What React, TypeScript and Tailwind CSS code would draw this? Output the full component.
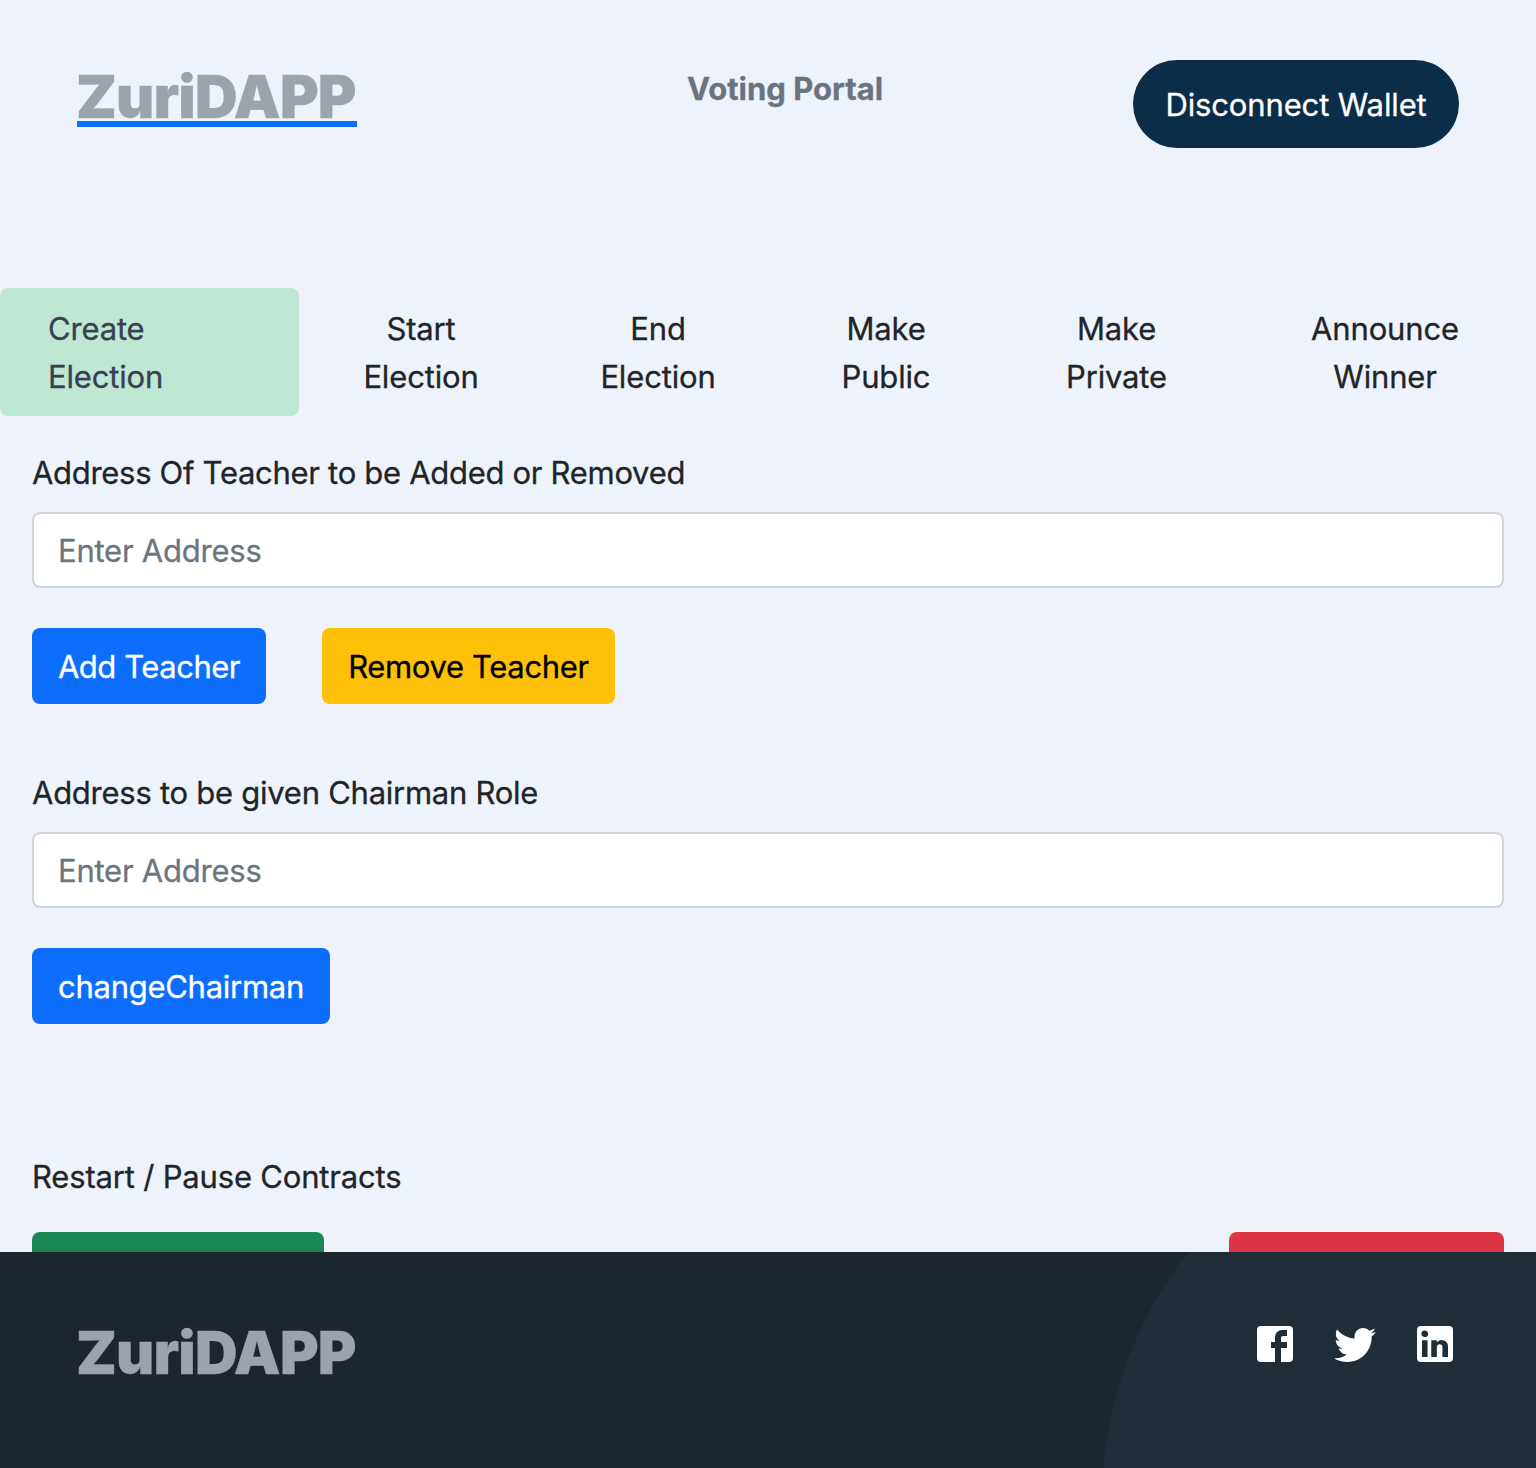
import type { ReactNode } from "react";

const steps = [
  { lines: ["Start", "Election"], width: "w-[244px]" },
  { lines: ["End", "Election"], width: "w-[230px]" },
  { lines: ["Make", "Public"], width: "w-[226px]" },
  { lines: ["Make", "Private"], width: "w-[235px]" },
  { lines: ["Announce", "Winner"], width: "w-[302px]" },
];

const socialIcons = [
  {
    name: "Facebook",
    path: "M5,3H19A2,2 0 0,1 21,5V19A2,2 0 0,1 19,21H5A2,2 0 0,1 3,19V5A2,2 0 0,1 5,3M18,5H15.5A3.5,3.5 0 0,0 12,8.5V11H10V14H12V21H15V14H18V11H15V9A1,1 0 0,1 16,8H18V5Z",
  },
  {
    name: "Twitter",
    path: "M22.46,6C21.69,6.35 20.86,6.58 20,6.69C20.88,6.16 21.56,5.32 21.88,4.31C21.05,4.81 20.13,5.16 19.16,5.36C18.37,4.5 17.26,4 16,4C13.65,4 11.73,5.92 11.73,8.29C11.73,8.63 11.77,8.96 11.84,9.27C8.28,9.09 5.11,7.38 3,4.79C2.63,5.42 2.42,6.16 2.42,6.94C2.42,8.43 3.17,9.75 4.33,10.5C3.62,10.5 2.96,10.3 2.38,10V10.03C2.38,12.11 3.86,13.85 5.82,14.24C5.46,14.34 5.08,14.39 4.69,14.39C4.42,14.39 4.15,14.36 3.89,14.31C4.43,16 6,17.26 7.89,17.29C6.43,18.45 4.58,19.13 2.56,19.13C2.22,19.13 1.88,19.11 1.54,19.07C3.44,20.29 5.7,21 8.12,21C16,21 20.33,14.46 20.33,8.79C20.33,8.6 20.33,8.42 20.32,8.23C21.16,7.63 21.88,6.87 22.46,6Z",
  },
  {
    name: "LinkedIn",
    path: "M19,3A2,2 0 0,1 21,5V19A2,2 0 0,1 19,21H5A2,2 0 0,1 3,19V5A2,2 0 0,1 5,3H19M18.5,18.5V13.2A3.26,3.26 0 0,0 15.24,9.94C14.39,9.94 13.4,10.46 12.92,11.24V10.13H10.13V18.5H12.92V13.57C12.92,12.8 13.54,12.17 14.31,12.17A1.4,1.4 0 0,1 15.71,13.57V18.5H18.5M6.88,8.56A1.68,1.68 0 0,0 8.56,6.88C8.56,5.95 7.81,5.19 6.88,5.19A1.69,1.69 0 0,0 5.19,6.88C5.19,7.81 5.95,8.56 6.88,8.56M8.27,18.5V10.13H5.5V18.5H8.27Z",
  },
];

function Logo({ underlined = false }: { underlined?: boolean }) {
  return (
    <a
      className={`block h-[61px] w-[280px] -indent-px text-[59px] leading-[61px] font-black tracking-[-0.85px] whitespace-nowrap text-[#9ca3af] ${
        underlined ? "border-b-[6px] border-[#0d6efd]" : ""
      }`}
    >
      ZuriDAPP
    </a>
  );
}

function AddressField({ label, tracking }: { label: string; tracking: string }) {
  return (
    <div>
      <label className={`block h-12 pt-px ${tracking}`}>{label}</label>
      <input
        placeholder="Enter Address"
        className="mt-4 block h-[76px] w-full rounded-lg border-2 border-[#ced4da] bg-white px-6 tracking-[-0.23px] outline-none placeholder:text-[#6c757d]"
      />
    </div>
  );
}

function Button({ className, children }: { className: string; children?: ReactNode }) {
  return (
    <button className={`block h-[76px] shrink-0 rounded-lg pt-0.5 text-center whitespace-nowrap ${className}`}>
      {children}
    </button>
  );
}

export default function App() {
  return (
    <div className="flex h-[1468px] w-[1536px] flex-col overflow-hidden bg-[#eef2fa] font-['Inter',sans-serif] text-[31px] leading-[48px] text-[#212529] [-webkit-text-stroke-width:0.3px]">
      <header className="flex h-[288px] shrink-0 items-start px-[77px]">
        <div className="w-[280px] pt-[66px]">
          <Logo underlined />
        </div>
        <h1 className="ml-[330px] pt-[65px] font-bold text-[#6b7280]">Voting Portal</h1>
        <button className="mt-[60px] ml-auto h-[88px] w-[326px] rounded-full bg-[#0c2d48] pt-0.5 tracking-[-0.13px] text-white">
          Disconnect Wallet
        </button>
      </header>

      <nav className="flex h-32 shrink-0 text-center tracking-[-0.16px]">
        <div className="w-[299px] rounded-lg bg-[#bee8d4] pt-[17px] pl-12 text-left text-[#374151]">
          Create
          <br />
          Election
        </div>
        {steps.map(({ lines, width }) => (
          <div key={lines.join(" ")} className={`shrink-0 pt-[17px] ${width}`}>
            {lines[0]}
            <br />
            {lines[1]}
          </div>
        ))}
      </nav>

      <main className="h-[836px] shrink-0 overflow-hidden px-8 pt-8">
        <AddressField label="Address Of Teacher to be Added or Removed" tracking="tracking-[-0.3px]" />
        <div className="mt-10 flex gap-14">
          <Button className="w-[234px] bg-[#0d6efd] tracking-[-0.46px] text-white">Add Teacher</Button>
          <Button className="w-[293px] bg-[#ffc107] tracking-[-0.34px] text-black">Remove Teacher</Button>
        </div>

        <div className="mt-16">
          <AddressField label="Address to be given Chairman Role" tracking="tracking-[-0.26px]" />
        </div>
        <Button className="mt-10 w-[298px] bg-[#0d6efd] tracking-[-0.28px] text-white">changeChairman</Button>

        <p className="mt-32 h-12 pt-px tracking-[-0.18px]">Restart / Pause Contracts</p>
        <div className="mt-8 flex justify-between">
          <Button className="w-[292px] bg-[#198754]" />
          <Button className="w-[275px] bg-[#dc3545]" />
        </div>
      </main>

      <footer className="relative flex h-[216px] shrink-0 items-start justify-between overflow-hidden bg-[#1c262f] px-[77px]">
        <div className="absolute top-[-152px] left-[1102px] size-[800px] rounded-full bg-[#1f2d38]" />
        <div className="relative pt-[70px]">
          <Logo />
        </div>
        <div className="relative flex gap-8 pt-[68px] text-white">
          {socialIcons.map(({ name, path }) => (
            <svg key={name} aria-label={name} viewBox="0 0 24 24" className="size-12 fill-current">
              <path d={path} />
            </svg>
          ))}
        </div>
      </footer>
    </div>
  );
}
